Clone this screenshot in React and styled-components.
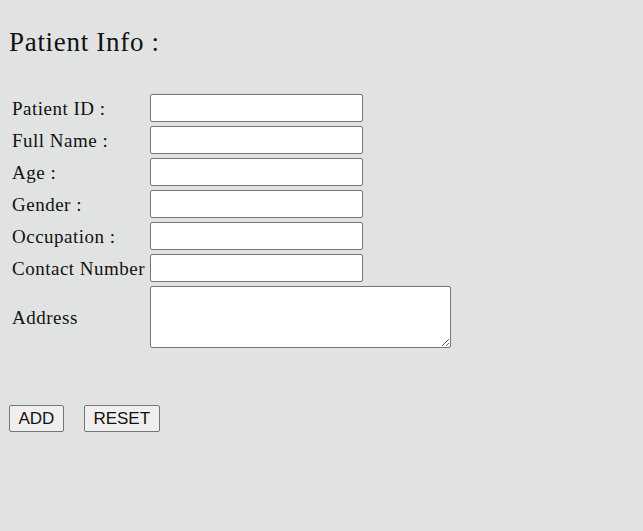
import React from "react";
import styled, { createGlobalStyle } from "styled-components";

const Global = createGlobalStyle`
  html, body { margin: 0; padding: 0; }
  body {
    background: #e1e3e2;
    font-family: "Liberation Serif", "Times New Roman", serif;
    color: #111;
  }
`;

const Page = styled.div`
  padding: 8px 9px;
  min-height: 531px;
  box-sizing: border-box;
`;

const Title = styled.h2`
  margin: 18px 0 0 0;
  font-size: 27px;
  font-weight: normal;
  line-height: 32px;
  letter-spacing: 0.7px;
`;

const Form = styled.div`
  margin-top: 36px;
  display: grid;
  grid-template-columns: 138px auto;
  row-gap: 4px;
  padding-left: 3px;
  align-items: center;
`;

const Label = styled.label`
  font-size: 19px;
  line-height: 22px;
  letter-spacing: 0.5px;
  white-space: nowrap;
  padding-top: 2px;
`;

const Input = styled.input`
  width: 213px;
  height: 28px;
  box-sizing: border-box;
  border: 1px solid #767676;
  border-radius: 2px;
  background: #fff;
  margin: 0;
`;

const TextArea = styled.textarea`
  width: 301px;
  height: 62px;
  box-sizing: border-box;
  border: 1px solid #767676;
  border-radius: 2px;
  background: #fff;
  margin: 0;
`;

const Buttons = styled.div`
  display: flex;
  gap: 20px;
  margin-top: 57px;
`;

const Button = styled.button`
  font-family: "Liberation Sans", Arial, sans-serif;
  font-size: 17px;
  height: 27px;
  padding: 0 8.5px;
  background: #efefef;
  border: 1px solid #767676;
  border-radius: 2px;
  color: #111;
`;

const fields = [
  "Patient ID :",
  "Full Name :",
  "Age :",
  "Gender :",
  "Occupation :",
  "Contact Number",
];

export default function App() {
  return (
    <Page>
      <Global />
      <Title>Patient Info :</Title>
      <Form>
        {fields.map((f) => (
          <React.Fragment key={f}>
            <Label>{f}</Label>
            <Input type="text" />
          </React.Fragment>
        ))}
        <Label>Address</Label>
        <TextArea />
      </Form>
      <Buttons>
        <Button>ADD</Button>
        <Button>RESET</Button>
      </Buttons>
    </Page>
  );
}
